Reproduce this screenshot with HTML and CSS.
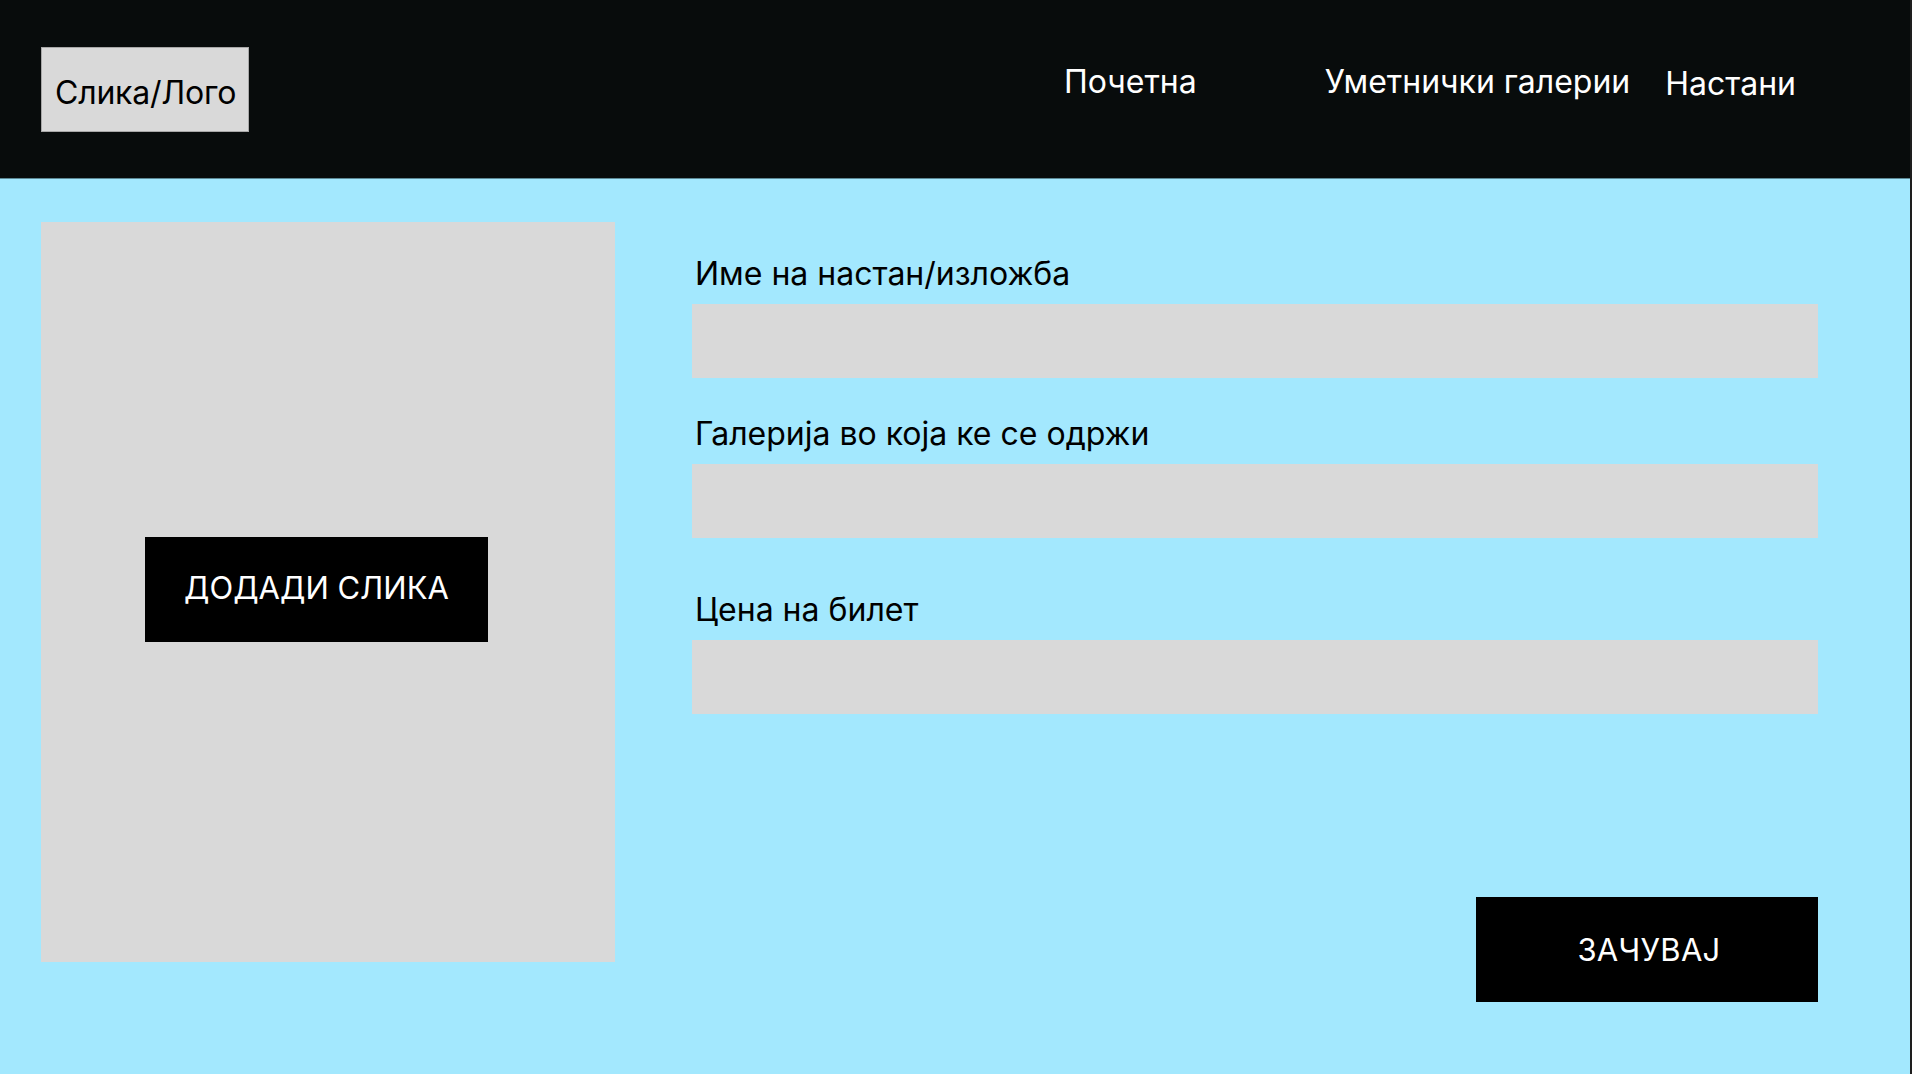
FILE: index.html
```html
<!DOCTYPE html>
<html lang="mk">
<head>
<meta charset="utf-8">
<title>Додади настан</title>
<link rel="stylesheet" href="styles.css">
</head>
<body>
<div class="page">
  <header class="topbar">
    <div class="logo">Слика/Лого</div>
    <nav class="nav">
      <a class="nav-link nav-home" href="#">Почетна</a>
      <a class="nav-link nav-galleries" href="#">Уметнички галерии</a>
      <a class="nav-link nav-events" href="#">Настани</a>
    </nav>
  </header>
  <main class="content">
    <section class="image-panel">
      <button class="btn btn-add" type="button">ДОДАДИ СЛИКА</button>
    </section>
    <form class="form">
      <label class="field-label label-first">Име на настан/изложба</label>
      <div class="field"></div>
      <label class="field-label label-second">Галерија во која ке се одржи</label>
      <div class="field"></div>
      <label class="field-label label-third">Цена на билет</label>
      <div class="field"></div>
      <div class="actions">
        <button class="btn btn-save" type="button">ЗАЧУВАЈ</button>
      </div>
    </form>
  </main>
</div>
</body>
</html>
```
FILE: styles.css
```css
* { box-sizing: border-box; }
html, body {
  margin: 0;
  padding: 0;
  height: 100%;
}
body {
  font-family: Inter, "Noto Sans", "DejaVu Sans", sans-serif;
  background: #1e1e1e;
  overflow: hidden;
}
.page {
  width: 1910px;
  height: 1074px;
  background: #a3e8fe;
  display: flex;
  flex-direction: column;
}
.topbar {
  height: 179px;
  flex: 0 0 179px;
  background: #080c0c;
  display: flex;
  align-items: flex-start;
  border-bottom: 1px solid #5d8a96;
}
.logo {
  margin: 47px 0 0 41px;
  width: 208px;
  height: 85px;
  background: #d9d9d9;
  border: 1px solid #a8a8a8;
  color: #000;
  font-size: 32px;
  display: flex;
  align-items: center;
  padding-left: 13px;
  padding-top: 6px;
  letter-spacing: -0.2px;
}
.nav {
  display: flex;
  align-items: flex-start;
  margin-left: 815px;
  margin-top: 62px;
}
.nav-link {
  color: #fff;
  text-decoration: none;
  font-size: 32px;
  line-height: 39px;
  white-space: nowrap;
}
.nav-galleries { margin-left: 128px; }
.nav-events { margin-left: 35px; margin-top: 2px; }
.content {
  display: flex;
  align-items: flex-start;
  padding: 43px 0 0 41px;
}
.image-panel {
  width: 574px;
  height: 740px;
  background: #d9d9d9;
  padding: 315px 0 0 104px;
}
.btn {
  background: #000;
  color: #fff;
  border: none;
  font-family: Inter, "Noto Sans", sans-serif;
  font-size: 31px;
  letter-spacing: 0.3px;
  display: flex;
  align-items: center;
  justify-content: center;
  padding: 0;
  cursor: pointer;
}
.btn-add {
  width: 343px;
  height: 105px;
  letter-spacing: 0;
  padding-bottom: 5px;
}
.form {
  margin-left: 77px;
  width: 1126px;
  padding-top: 34px;
  display: flex;
  flex-direction: column;
}
.field-label {
  display: block;
  font-size: 32px;
  line-height: 36px;
  color: #000;
  padding-left: 3px;
  margin-bottom: 12px;
}
.label-second { margin-top: 38px; }
.label-third { margin-top: 54px; }
.field {
  height: 74px;
  background: #d9d9d9;
}
.actions {
  display: flex;
  justify-content: flex-end;
  margin-top: 183px;
}
.btn-save {
  width: 342px;
  height: 105px;
  padding-left: 4px;
}
```
